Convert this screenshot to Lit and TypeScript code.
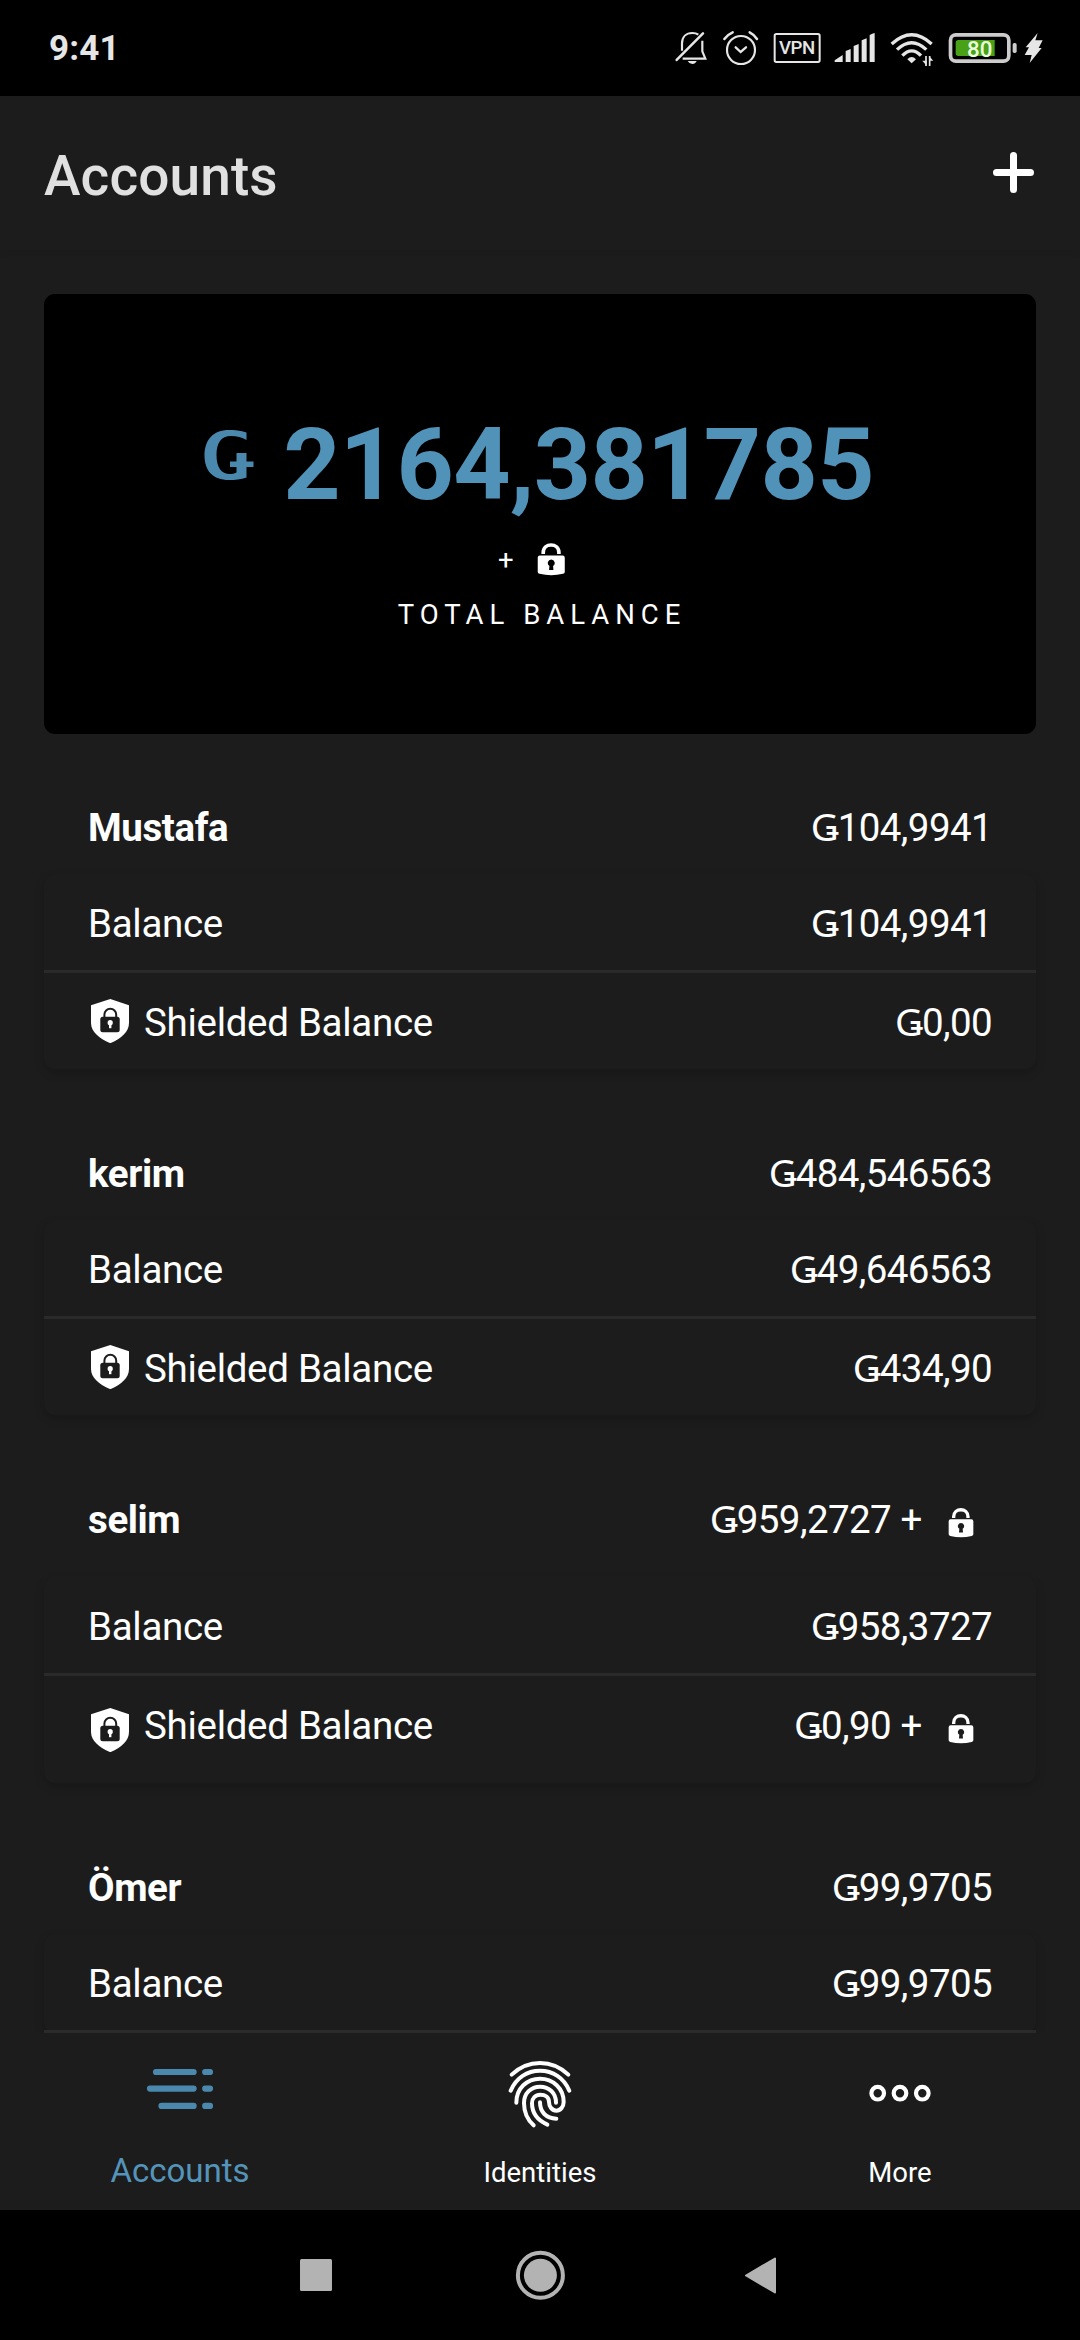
import { LitElement, html, css, svg, nothing } from "lit";
import { customElement, property } from "lit/decorators.js";

interface Account {
  name: string;
  total: string;
  balance: string;
  shielded: string | null;
  locked: boolean;
}

const accounts: Account[] = [
  { name: "Mustafa", total: "104,9941", balance: "104,9941", shielded: "0,00", locked: false },
  { name: "kerim", total: "484,546563", balance: "49,646563", shielded: "434,90", locked: false },
  { name: "selim", total: "959,2727", balance: "958,3727", shielded: "0,90", locked: true },
  { name: "Ömer", total: "99,9705", balance: "99,9705", shielded: null, locked: false },
];

const lockShape = svg`
  <path d="M820 113v-3.500C820 81 863 81 863 109.500V113" fill="none" stroke="#fff" stroke-width="10"/>
  <path fill="#fff" fill-rule="evenodd" d="M811 117H873Q879 117 879 123V162Q879 166 874 167Q842 175 810 167Q805 166 805 162V123Q805 117 811 117ZM842 128a9.500 9.500 0 0 0-5 17.500l-1 11h12l-1-11a9.500 9.500 0 0 0-5-17.500Z"/>`;

const lock = html`<svg class="lock" viewBox="803 80 78 93">${lockShape}</svg>`;

const shield = html`<svg class="shield" viewBox="88 999 44 44">
  <path fill="#fff" d="M110.300 999 129 1005.200V1023C129 1032 121 1038.500 110.300 1043.200C99.500 1038.500 91 1032 91 1023V1005.200Z"/>
  <path d="M104.400 1017v-2.300a5.900 5.900 0 0 1 11.800 0v2.300" fill="none" stroke="#1c1c1c" stroke-width="2"/>
  <rect x="100.300" y="1016.700" width="19.400" height="15.600" rx="2.500" fill="#1c1c1c"/>
  <circle cx="110.200" cy="1022.700" r="2.600" fill="#fff"/>
  <path fill="#fff" d="M109 1023h2.400v5.200h-2.400z"/>
</svg>`;

@customElement("status-bar")
export class StatusBar extends LitElement {
  static styles = css`
    :host {
      display: flex;
      height: 96px;
      box-sizing: border-box;
      padding: 30px 36.3px 0 49px;
      background: #000;
      justify-content: space-between;
      align-items: flex-start;
      font-family: Roboto, sans-serif;
    }
    .time { font-size: 35px; line-height: 38px; font-weight: 700; color: #e6e6e6; letter-spacing: 0.2px; }
    .icons { display: flex; }
    .icons svg { display: block; height: 36.67px; }
    .bell { width: 34.67px; margin-right: 13.3px; }
    .alarm { width: 37.33px; margin-right: 14px; }
    .vpn { width: 48.33px; margin-right: 12.7px; }
    .signal { width: 41.33px; margin-right: 14.7px; }
    .wifi { width: 44px; margin-right: 14px; }
    .battery { width: 69.33px; margin-right: 6.7px; }
    .bolt { width: 19.33px; }
    text { font-family: Roboto, sans-serif; }
  `;
  render() {
    return html`
      <div class="time">9:41</div>
      <div class="icons">
        <svg class="bell" viewBox="72 90 104 110" fill="none" stroke="#e6e6e6" stroke-width="6.500">
          <path d="M80 180 159 100" stroke-width="7.500" stroke-linecap="round"/>
          <path d="M96 152V130C96 110 109 99 127 99Q138 99 145 104"/>
          <path d="M98 176H166L157 154V122"/>
          <path d="M113 183H140Q136 192 127 192T113 183Z" fill="#e6e6e6" stroke="none"/>
        </svg>
        <svg class="alarm" viewBox="216 90 112 110" fill="none" stroke="#e6e6e6" stroke-width="6.500" stroke-linecap="round">
          <circle cx="273" cy="150" r="42"/>
          <path d="M257 142 272 156 288 142" stroke-width="7"/>
          <path d="M223 117Q232 104 248 97M299 97Q313 104 321 117" stroke-width="7.500"/>
        </svg>
        <svg class="vpn" viewBox="370 90 145 110">
          <rect x="375" y="102" width="135" height="84" rx="5" fill="none" stroke="#e6e6e6" stroke-width="6"/>
          <text x="442.500" y="163" text-anchor="middle" font-size="56" font-weight="500" fill="#e6e6e6" textLength="109">VPN</text>
        </svg>
        <svg class="signal" viewBox="553 90 124 110" fill="#e6e6e6">
          <path d="M555 186V181L579 165V186ZM588 186V153L603 147V186ZM612 186V138L627 132V186ZM636 186V121L651 115V186ZM660 186V105Q668 100 675 99V186Z"/>
        </svg>
        <svg class="wifi" viewBox="721 90 132 110" fill="none" stroke="#e6e6e6" stroke-width="10">
          <path d="M726 132Q786 77 846 132"/>
          <path d="M742 149Q786 107 830 149"/>
          <path d="M758 167Q786 138 814 167"/>
          <path d="M773 178Q786 164 799 178L786 190Z" fill="#e6e6e6" stroke="none"/>
          <path d="M829 168V198M840 198V168" stroke-width="5"/>
          <path d="M818 182H831V197ZM851 182H838V168Z" fill="#e6e6e6" stroke="none"/>
        </svg>
        <svg class="battery" viewBox="895 90 208 110">
          <rect x="902.500" y="104.500" width="175" height="79" rx="16" fill="none" stroke="#ccc" stroke-width="11"/>
          <path d="M926 120H1035V168H926Q918 168 918 160V128Q918 120 926 120Z" fill="#48a116"/>
          <rect x="1089" y="129" width="12" height="30" rx="5" fill="#ccc"/>
          <text x="990" y="170" text-anchor="middle" font-size="67" font-weight="500" fill="#eaffdc" textLength="76">80</text>
        </svg>
        <svg class="bolt" viewBox="1123 90 58 110" fill="#e6e6e6">
          <path d="M1164 99 1157 121H1179L1167 144H1176L1140 189 1146 165H1125L1138 142H1128Z"/>
        </svg>
      </div>
    `;
  }
}

@customElement("account-card")
export class AccountCard extends LitElement {
  @property({ attribute: false }) account!: Account;
  static styles = css`
    :host { display: block; flex: none; font-family: Roboto, sans-serif; font-size: 38.5px; color: #fff; letter-spacing: -0.3px; }
    .row { display: flex; justify-content: space-between; height: 96px; padding: 0 44px; line-height: 100px; }
    .row.tall { height: 107px; }
    .name { font-weight: 700; letter-spacing: -0.4px; }
    .value, .label { display: flex; white-space: pre; }
    .amount { letter-spacing: -0.6px; }
    .currency { font-family: "Noto Sans", sans-serif; line-height: 0; letter-spacing: -1px; }
    .plus { letter-spacing: 0; }
    .details { border-radius: 11px; background: #1c1c1c; box-shadow: 0 4px 10px rgba(0, 0, 0, 0.18); }
    .divider { height: 3px; background: #2a2a2a; }
    .lock { width: 26px; height: 31px; margin: 36.7px 18px 0 16px; }
    .shield { width: 44px; height: 44px; margin-right: 12px; align-self: center; }
  `;
  private value(amount: string, locked: boolean) {
    return html`<div class="value"><span class="amount"><span class="currency">Ǥ</span>${amount}</span>${locked ? html`<span class="plus"> + </span>${lock}` : nothing}</div>`;
  }
  render() {
    const a = this.account;
    const tall = a.locked ? "row tall" : "row";
    return html`
      <div class=${tall}>
        <div class="name">${a.name}</div>
        ${this.value(a.total, a.locked)}
      </div>
      <div class="details">
        <div class="row"><div>Balance</div>${this.value(a.balance, false)}</div>
        <div class="divider"></div>
        ${a.shielded === null
          ? nothing
          : html`<div class=${tall}>
              <div class="label">${shield}Shielded Balance</div>
              ${this.value(a.shielded, a.locked)}
            </div>`}
      </div>
    `;
  }
}

@customElement("tab-bar")
export class TabBar extends LitElement {
  static styles = css`
    :host {
      display: grid;
      grid-template-columns: repeat(3, 1fr);
      height: 177px;
      flex: none;
      background: #1c1c1c;
      font-family: Roboto, sans-serif;
      color: #fff;
      position: relative;
    }
    .tab { display: flex; flex-direction: column; align-items: center; font-size: 27.5px; }
    .tab svg { display: block; height: 80px; width: 80px; margin-top: 20px; }
    .tab span { line-height: 40px; margin-top: 20px; }
    .active { font-size: 33px; color: #5594ba; }
    .active span { margin-top: 18px; }
  `;
  render() {
    return html`
      <div class="tab active">
        <svg viewBox="140 2053 80 80" stroke="#4a88ae" stroke-width="6.200" stroke-linecap="round">
          <path d="M156 2072H193.600M205.200 2072H210M150 2088.600H193.600M205.200 2088.600H210M161.500 2105.900H193.600M205.200 2105.900H210"/>
        </svg>
        <span>Accounts</span>
      </div>
      <div class="tab">
        <svg viewBox="150 99 240 240" fill="none" stroke="#fff" stroke-width="12" stroke-linecap="round">
          <path d="M185 164Q222 129 270 129T355 164"/>
          <path d="M182 212C198 173 232 152 270 152S342 173 358 212"/>
          <path d="M199 248C199 205 231 176 270 176S341 205 341 246A22 26 0 0 1 297 246C297 232 286 224 271 224S246 235 246 250C246 280 263 301 292 314"/>
          <path d="M318 248C318 219 297 200 270 200S222 220 222 249C222 277 233 300 251 316"/>
          <path d="M270 247C270 276 288 295 319 296"/>
        </svg>
        <span>Identities</span>
      </div>
      <div class="tab">
        <svg viewBox="860 2053 80 80" fill="none" stroke="#fff" stroke-width="4.200">
          <circle cx="877.700" cy="2093.200" r="6.300"/>
          <circle cx="900" cy="2093.200" r="6.300"/>
          <circle cx="922.300" cy="2093.200" r="6.300"/>
        </svg>
        <span>More</span>
      </div>
    `;
  }
}

@customElement("app-root")
export class AppRoot extends LitElement {
  static styles = css`
    :host {
      display: flex;
      flex-direction: column;
      width: 1080px;
      height: 2340px;
      overflow: hidden;
      background: #1c1c1c;
      font-family: Roboto, sans-serif;
      color: #fff;
    }
    .header {
      height: 154px;
      flex: none;
      box-sizing: border-box;
      padding: 0 44px;
      display: flex;
      justify-content: space-between;
      box-shadow: 0 2px 6px rgba(0, 0, 0, 0.08);
    }
    .title { font-size: 55px; font-weight: 500; line-height: 160px; color: #e0e0e0; letter-spacing: 0.1px; }
    .add { width: 45px; height: 45px; margin: 54px 0 0; }
    .content { height: 1783px; flex: none; box-sizing: border-box; padding: 44px 44px 0; overflow: hidden; }
    .total {
      height: 440px;
      margin-bottom: 44px;
      border-radius: 11px;
      background: #000;
      display: flex;
      flex-direction: column;
      align-items: center;
    }
    .amount { display: flex; margin-top: 110px; font-size: 100px; line-height: 122px; font-weight: 700; color: #5192b9; letter-spacing: -0.7px; padding-right: 2px; }
    .amount svg { width: 50px; height: 50px; margin: 26px 29px 0 0; }
    .extra { display: flex; height: 50px; padding-right: 17px; line-height: 52px; font-size: 27.5px; margin-top: 8px; }
    .extra .lock { width: 28.500px; height: 34px; margin: 8px 0 0 23px; }
    .caption { font-size: 27.5px; line-height: 40px; letter-spacing: 6px; margin-top: 11px; padding-left: 4px; }
    .list { display: flex; flex-direction: column; gap: 55px; }
    .system { height: 130px; background: #000; display: flex; flex: none; padding: 33px 298px 0; justify-content: space-between; box-sizing: border-box; }
    .system svg { height: 64px; display: block; }
    .square { width: 36px; }
    .home { width: 64px; margin-left: 4px; }
    .back { width: 40px; }
  `;
  render() {
    return html`
      <status-bar></status-bar>
      <div class="header">
        <div class="title">Accounts</div>
        <svg class="add" viewBox="0 0 45 45" stroke="#fff" stroke-width="7" stroke-linecap="round">
          <path d="M22.500 5.500V39.500M5.500 22.500H39.500"/>
        </svg>
      </div>
      <div class="content">
        <div class="total">
          <div class="amount">
            <svg viewBox="203 430 50 50" fill="#4a88ae">
              <path d="M245.500 432.500C240 430.500 233 430 228 430C212 430 203.500 440 203.500 455.500C203.500 471 212 480 228 480C234 480 240 479.500 245.500 477.500V453H235.500V472.500C233 474 231 474 229 474C220 474 215.500 467 215.500 455C215.500 443 220 436 230 436C236 436 241 437.500 245.500 440Z"/>
              <rect x="229" y="461.500" width="23.500" height="5.500"/>
            </svg>
            <span>2164,381785</span>
          </div>
          <div class="extra"><span>+</span>${lock}</div>
          <div class="caption">TOTAL BALANCE</div>
        </div>
        <div class="list">${accounts.map((a) => html`<account-card .account=${a}></account-card>`)}</div>
      </div>
      <tab-bar></tab-bar>
      <div class="system">
        <svg class="square" viewBox="298 2243 36 64"><rect x="300" y="2259" width="32" height="32" rx="1.500" fill="#b3b3b3"/></svg>
        <svg class="home" viewBox="508 2243 64 64">
          <circle cx="540.400" cy="2275.300" r="22.500" fill="none" stroke="#b3b3b3" stroke-width="4"/>
          <circle cx="540.400" cy="2275.300" r="16.500" fill="#b3b3b3"/>
        </svg>
        <svg class="back" viewBox="742 2243 40 64"><path d="M746 2275.500 775 2258.500V2292.500Z" fill="#b3b3b3" stroke="#b3b3b3" stroke-width="2" stroke-linejoin="round"/></svg>
      </div>
    `;
  }
}
